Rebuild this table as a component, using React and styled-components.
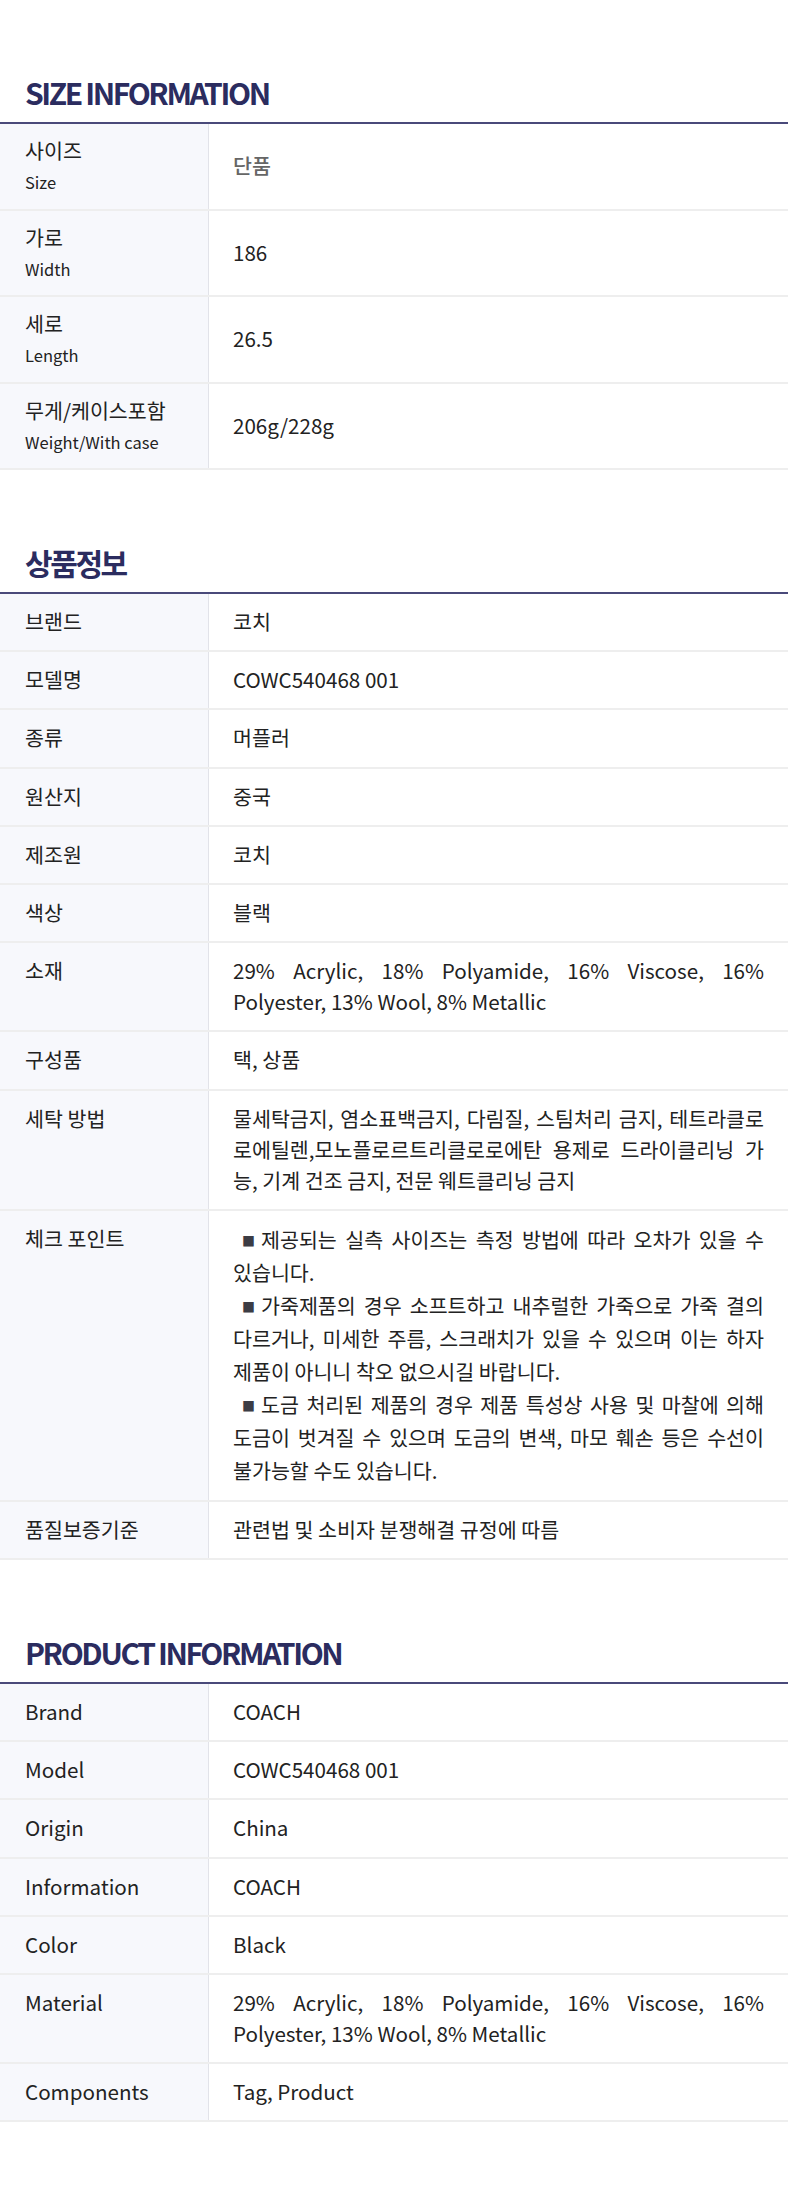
import styled, { createGlobalStyle } from "styled-components";

const GlobalStyle = createGlobalStyle`
  body {
    margin: 0;
    background: #ffffff;
    font-family: "Noto Sans CJK KR", "Noto Sans", sans-serif;
    color: #222222;
  }
`;

const Page = styled.div`
  width: 788px;
  padding-bottom: 70px;
`;

const Section = styled.section`
  padding-top: 72px;
`;

const Title = styled.h2`
  margin: 0;
  padding: 0 25px 10px;
  font-size: 30px;
  line-height: 40px;
  font-weight: 700;
  letter-spacing: -2.4px;
  color: #2b2c5f;
`;

const Table = styled.div`
  border-top: 2px solid #4a4a7a;
`;

const Row = styled.div`
  display: grid;
  grid-template-columns: 209px 1fr;
  align-items: stretch;
  border-bottom: 2px solid #eeeeee;
`;

const Label = styled.div`
  background: #f7f8fc;
  border-right: 1px solid #e2e3e9;
  padding: ${(p) => (p.$tall ? "10.25px" : "12px")} 20px
    ${(p) => (p.$tall ? "10.25px" : "13.2px")} 25px;
  font-size: 20.6px;
  line-height: ${(p) => (p.$tall ? "32px" : "31px")};
  color: #222222;
`;

const SubLabel = styled.div`
  font-size: 16.5px;
  line-height: 32px;
`;

const Value = styled.div`
  display: flex;
  flex-direction: column;
  justify-content: ${(p) => (p.$center ? "center" : "flex-start")};
  padding: 12px 24px 13.2px;
  font-size: 20.6px;
  line-height: 31px;
  color: ${(p) => (p.$muted ? "#666666" : "#222222")};
  font-weight: ${(p) => (p.$muted ? 500 : 400)};
  text-align: justify;
`;

const Para = styled.div`
  text-align: justify;
  word-break: keep-all;
  line-height: 33px;

  &::before {
    content: "■";
    display: inline-block;
    margin: 0 6px 0 9px;
    font-size: 13px;
    line-height: 1;
    color: #3c3c44;
    vertical-align: 2px;
  }
`;

const sizeRows = [
  { ko: "사이즈", en: "Size", value: "단품", muted: true },
  { ko: "가로", en: "Width", value: "186" },
  { ko: "세로", en: "Length", value: "26.5" },
  { ko: "무게/케이스포함", en: "Weight/With case", value: "206g/228g" },
];

const infoRows = [
  { label: "브랜드", value: "코치" },
  { label: "모델명", value: "COWC540468 001" },
  { label: "종류", value: "머플러" },
  { label: "원산지", value: "중국" },
  { label: "제조원", value: "코치" },
  { label: "색상", value: "블랙" },
  {
    label: "소재",
    value: "29% Acrylic, 18% Polyamide, 16% Viscose, 16% Polyester, 13% Wool, 8% Metallic",
  },
  { label: "구성품", value: "택, 상품" },
  {
    label: "세탁 방법",
    value:
      "물세탁금지, 염소표백금지, 다림질, 스팀처리 금지, 테트라클로로에틸렌,모노플로르트리클로로에탄 용제로 드라이클리닝 가능, 기계 건조 금지, 전문 웨트클리닝 금지",
  },
  {
    label: "체크 포인트",
    points: [
      "제공되는 실측 사이즈는 측정 방법에 따라 오차가 있을 수 있습니다.",
      "가죽제품의 경우 소프트하고 내추럴한 가죽으로 가죽 결의 다르거나, 미세한 주름, 스크래치가 있을 수 있으며 이는 하자 제품이 아니니 착오 없으시길 바랍니다.",
      "도금 처리된 제품의 경우 제품 특성상 사용 및 마찰에 의해 도금이 벗겨질 수 있으며 도금의 변색, 마모 훼손 등은 수선이 불가능할 수도 있습니다.",
    ],
  },
  { label: "품질보증기준", value: "관련법 및 소비자 분쟁해결 규정에 따름" },
];

const productRows = [
  { label: "Brand", value: "COACH" },
  { label: "Model", value: "COWC540468 001" },
  { label: "Origin", value: "China" },
  { label: "Information", value: "COACH" },
  { label: "Color", value: "Black" },
  {
    label: "Material",
    value: "29% Acrylic, 18% Polyamide, 16% Viscose, 16% Polyester, 13% Wool, 8% Metallic",
  },
  { label: "Components", value: "Tag, Product" },
];

const InfoTable = ({ rows }) => (
  <Table>
    {rows.map((row) => (
      <Row key={row.label}>
        <Label>{row.label}</Label>
        <Value>
          {row.points
            ? row.points.map((p, i) => <Para key={i}>{p}</Para>)
            : row.value}
        </Value>
      </Row>
    ))}
  </Table>
);

const App = () => {
  return (
    <Page>
      <GlobalStyle />
      <Section>
        <Title>SIZE INFORMATION</Title>
        <Table>
          {sizeRows.map((row) => (
            <Row key={row.en}>
              <Label $tall>
                {row.ko}
                <SubLabel>{row.en}</SubLabel>
              </Label>
              <Value $center $muted={row.muted}>
                {row.value}
              </Value>
            </Row>
          ))}
        </Table>
      </Section>

      <Section>
        <Title>상품정보</Title>
        <InfoTable rows={infoRows} />
      </Section>

      <Section>
        <Title>PRODUCT INFORMATION</Title>
        <InfoTable rows={productRows} />
      </Section>
    </Page>
  );
};

export default App;
